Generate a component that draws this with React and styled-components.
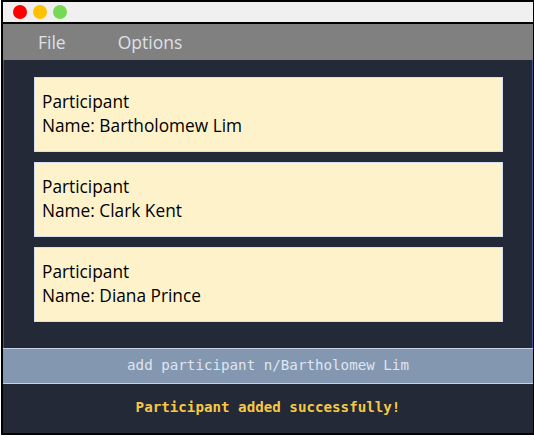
import React from "react";
import styled, { createGlobalStyle } from "styled-components";

const Global = createGlobalStyle`
  html, body { margin: 0; padding: 0; background: #ffffff; }
  body { width: 534px; height: 437px; overflow: hidden; }
`;

const Frame = styled.div`
  box-sizing: border-box;
  width: 534px;
  height: 435px;
  margin-left: 1px;
  border: 2px solid #000;
  display: flex;
  flex-direction: column;
  background: #fff;
`;

const TitleBar = styled.div`
  height: 20px;
  background: #f0f0f0;
  border-bottom: 2px solid #000;
  display: flex;
  align-items: center;
  gap: 6px;
  padding-left: 10px;
`;

const Light = styled.span`
  width: 14px;
  height: 14px;
  border-radius: 50%;
  background: ${(p) => p.$color};
`;

const MenuBar = styled.div`
  height: 36px;
  background: #808080;
  display: flex;
  align-items: center;
  padding-left: 35px;
  gap: 52px;
  font-family: "Open Sans", "DejaVu Sans", sans-serif;
  font-size: 17.5px;
  color: #dde1e6;
`;

const MenuItem = styled.span``;

const ListArea = styled.div`
  flex: 1;
  background: #232936;
  border-left: 1px solid #3b5694;
  border-right: 1px solid #3b5694;
  padding: 17px 29px 0 30px;
  display: flex;
  flex-direction: column;
  gap: 10px;
`;

const Card = styled.div`
  box-sizing: border-box;
  height: 75px;
  background: #fef2cb;
  border: 1px solid #d4e1f3;
  padding: 12px 7px 0;
  font-family: "Open Sans", "DejaVu Sans", sans-serif;
  font-size: 17.3px;
  line-height: 24px;
  color: #000;
`;

const CommandBar = styled.div`
  box-sizing: border-box;
  height: 36px;
  background: #8497b0;
  border-top: 1px solid #c6d3e6;
  border-bottom: 1px solid #c6d3e6;
  display: flex;
  align-items: center;
  justify-content: center;
  padding-bottom: 3px;
  font-family: "DejaVu Sans Mono", monospace;
  font-size: 14.2px;
  color: #dfe6f0;
`;

const Result = styled.div`
  box-sizing: border-box;
  height: 49px;
  background: #232936;
  display: flex;
  align-items: center;
  justify-content: center;
  padding-bottom: 4px;
  font-family: "DejaVu Sans Mono", monospace;
  font-size: 14.2px;
  font-weight: bold;
  color: #f7c844;
`;

const participants = ["Bartholomew Lim", "Clark Kent", "Diana Prince"];

export default function App() {
  return (
    <>
      <Global />
      <Frame>
        <TitleBar>
          <Light $color="#ff0000" />
          <Light $color="#ffc000" />
          <Light $color="#77d854" />
        </TitleBar>
        <MenuBar>
          <MenuItem>File</MenuItem>
          <MenuItem>Options</MenuItem>
        </MenuBar>
        <ListArea>
          {participants.map((n) => (
            <Card key={n}>
              Participant
              <br />
              Name: {n}
            </Card>
          ))}
        </ListArea>
        <CommandBar>add participant n/Bartholomew Lim</CommandBar>
        <Result>Participant added successfully!</Result>
      </Frame>
    </>
  );
}
